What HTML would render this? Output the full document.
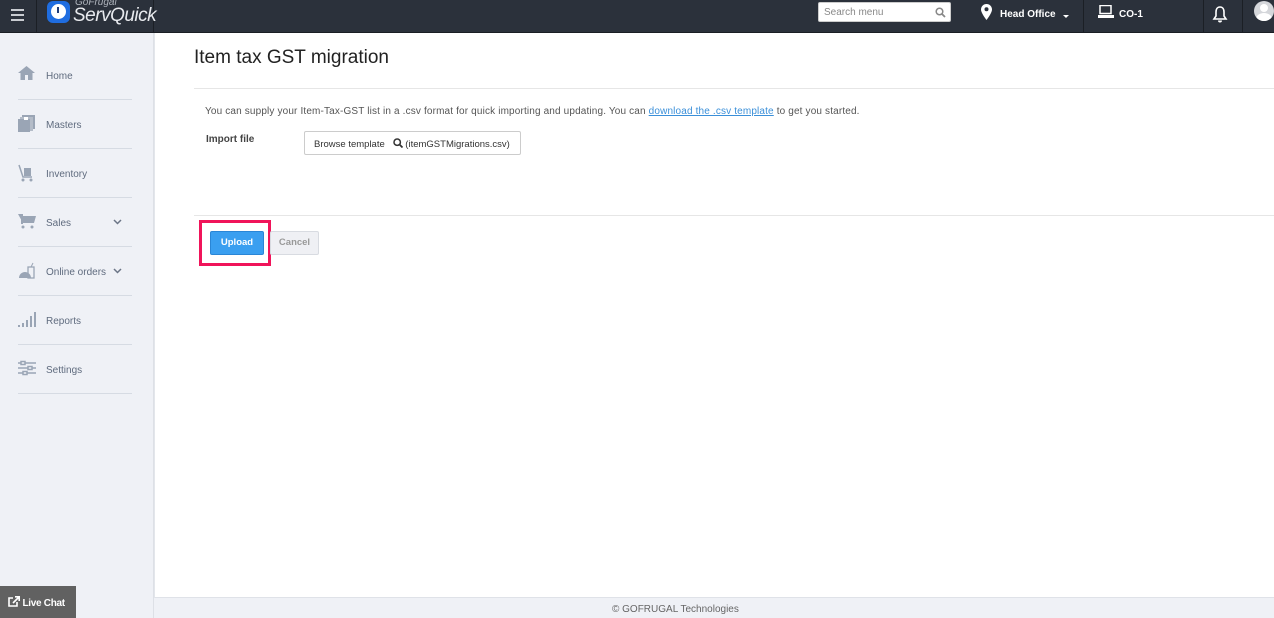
<!DOCTYPE html><html><head><style>
*{margin:0;padding:0;box-sizing:border-box}
body{width:1274px;height:618px;overflow:hidden;background:#eff1f6;font-family:"Liberation Sans",Arial,sans-serif;position:relative}
.hdr{position:absolute;left:0;top:0;width:1274px;height:33px;background:#2b313b;border-bottom:1px solid #1a1e24}
.hdr .sep{position:absolute;top:0;width:1px;height:32px;background:#1b1f25}
.t{position:absolute;white-space:nowrap}
.side{position:absolute;left:0;top:33px;width:154px;height:585px;background:#eff1f6;border-right:1px solid #dde0e6}
.item{position:absolute;left:18px;width:114px;height:49px;border-bottom:1px solid #d6dbe3}
.item span{position:absolute;left:28px;top:20px;font-size:10px;color:#5f6b7e}
.item svg{position:absolute;left:0;top:15px}
.main{position:absolute;left:154px;top:33px;width:1120px;height:565px;background:#fff;border-bottom:1px solid #dfe2e8;border-left:1px solid #e3e6eb}
</style></head><body>
<div class="hdr">
<div class="t" style="left:11px;top:9px;width:13px;height:2px;background:#c9ccd1;box-shadow:0 5px 0 #c9ccd1,0 10px 0 #c9ccd1"></div>
<div class="sep" style="left:36px"></div><div class="sep" style="left:153px"></div>
<div class="t" style="left:47px;top:1px;width:23px;height:22px;border-radius:6px;background:#1f6de0"><div style="position:absolute;left:4px;top:3px;width:15px;height:15px;border-radius:50%;background:#fff"></div><div style="position:absolute;left:10px;top:6px;width:2px;height:6px;background:#1f3c7a"></div></div>
<div class="t" style="left:75px;top:-3px;font-size:10px;font-style:italic;color:#aeb3bb">GoFrugal</div>
<div class="t" style="left:73px;top:5px;font-size:19px;font-style:italic;color:#e8eaee;letter-spacing:-0.5px">ServQuick</div>
<div class="t" style="left:818px;top:2px;width:133px;height:20px;background:#fff;border-radius:2px;border:1px solid #ccc"><span style="position:absolute;left:5px;top:4px;font-size:10px;color:#888">Search menu</span><svg style="position:absolute;right:4px;top:4px" width="11" height="11" viewBox="0 0 11 11"><circle cx="4.5" cy="4.5" r="3.3" fill="none" stroke="#888" stroke-width="1.5"/><path d="M7 7l3 3" stroke="#888" stroke-width="1.8"/></svg></div>
<svg class="t" style="left:981px;top:4px" width="11" height="16" viewBox="0 0 11 16"><path d="M5.5 0C2.5 0 0 2.4 0 5.5 0 9 5.5 16 5.5 16S11 9 11 5.5C11 2.4 8.5 0 5.5 0z" fill="#fff"/><circle cx="5.5" cy="5.3" r="2" fill="#2b313b"/></svg>
<div class="t" style="left:1000px;top:9px;font-size:10px;font-weight:bold;color:#fff">Head Office</div>
<div class="t" style="left:1063px;top:15px;border:3px solid transparent;border-top:3px solid #fff"></div>
<div class="sep" style="left:1083px"></div>
<svg class="t" style="left:1098px;top:5px" width="16" height="14" viewBox="0 0 16 14"><rect x="2" y="0.5" width="11" height="8" fill="none" stroke="#fff" stroke-width="1.5"/><rect x="0" y="10" width="16" height="3" fill="#fff"/></svg>
<div class="t" style="left:1119px;top:9px;font-size:10px;font-weight:bold;color:#fff">CO-1</div>
<div class="sep" style="left:1203px"></div>
<svg class="t" style="left:1212px;top:6px" width="16" height="17" viewBox="0 0 16 17"><path d="M8 1C5 1 4 3.5 4 6v4L2 13h12l-2-3V6C12 3.5 11 1 8 1z" fill="none" stroke="#fff" stroke-width="1.6"/><path d="M6 14.5a2 2 0 0 0 4 0z" fill="#fff"/></svg>
<div class="sep" style="left:1242px"></div>
<div class="t" style="left:1254px;top:1px;width:20px;height:20px;border-radius:50%;background:#d5d7db;overflow:hidden"><div style="position:absolute;left:6px;top:3px;width:8px;height:8px;border-radius:50%;background:#fff"></div><div style="position:absolute;left:2px;top:12px;width:16px;height:12px;border-radius:50%;background:#fff"></div></div>
</div>
<div class="side">
<div class="item" style="top:18px"><svg width="17" height="14" viewBox="0 0 17 14"><path d="M8.5 0L0 7h2.5v7h4.5V9h3v5h4.5V7H17z" fill="#9aa5b5"/></svg><span>Home</span></div>
<div class="item" style="top:67px"><svg width="17" height="17" viewBox="0 0 17 17"><rect x="4" y="0" width="13" height="14" fill="#9aa5b5"/><rect x="2" y="2" width="13" height="14" fill="#b4bcc8"/><rect x="0" y="4" width="12" height="13" fill="#9aa5b5"/><rect x="6" y="2" width="4" height="3" fill="#fff"/></svg><span>Masters</span></div>
<div class="item" style="top:116px"><svg width="16" height="18" viewBox="0 0 16 18"><path d="M1 1l4 12h9" stroke="#9aa5b5" fill="none" stroke-width="1.5"/><rect x="6" y="4" width="7" height="8" fill="#9aa5b5"/><circle cx="5" cy="16" r="1.5" fill="#9aa5b5"/><circle cx="13" cy="16" r="1.5" fill="#9aa5b5"/></svg><span>Inventory</span></div>
<div class="item" style="top:165px"><svg width="18" height="16" viewBox="0 0 18 16"><path d="M0 1h3l1 2h14l-2 7H5z" fill="#9aa5b5"/><rect x="3" y="1" width="2" height="10" fill="#9aa5b5"/><circle cx="5" cy="14" r="1.5" fill="#9aa5b5"/><circle cx="14" cy="14" r="1.5" fill="#9aa5b5"/></svg><span>Sales</span><svg style="left:95px;top:21px" width="9" height="6" viewBox="0 0 9 6"><path d="M1 1l3.5 3.5L8 1" stroke="#6b7586" stroke-width="1.5" fill="none"/></svg></div>
<div class="item" style="top:214px"><svg width="18" height="17" viewBox="0 0 18 17"><path d="M1 16a6 6 0 0 1 12 0z" fill="#9aa5b5"/><rect x="10" y="5" width="6" height="11" fill="none" stroke="#9aa5b5" stroke-width="1.3"/><path d="M13 5l2-4" stroke="#9aa5b5"/></svg><span>Online orders</span><svg style="left:95px;top:21px" width="9" height="6" viewBox="0 0 9 6"><path d="M1 1l3.5 3.5L8 1" stroke="#6b7586" stroke-width="1.5" fill="none"/></svg></div>
<div class="item" style="top:263px"><svg width="18" height="16" viewBox="0 0 18 16"><rect x="0" y="14" width="2" height="2" fill="#9aa5b5"/><rect x="4" y="12" width="2" height="4" fill="#9aa5b5"/><rect x="8" y="9" width="2" height="7" fill="#9aa5b5"/><rect x="12" y="5" width="2" height="11" fill="#9aa5b5"/><rect x="16" y="1" width="2" height="15" fill="#9aa5b5"/></svg><span>Reports</span></div>
<div class="item" style="top:312px"><svg width="18" height="16" viewBox="0 0 18 16"><g stroke="#9aa5b5" stroke-width="1.5" fill="#eff1f6"><path d="M0 3h18M0 8h18M0 13h18"/><rect x="3" y="1.5" width="4" height="3"/><rect x="10" y="6.5" width="4" height="3"/><rect x="5" y="11.5" width="4" height="3"/></g></svg><span>Settings</span></div>
</div>
<div class="t" style="left:0;top:586px;width:76px;height:32px;background:#616161;color:#fff;font-size:10px;font-weight:bold;padding:10px 0 0 8px;letter-spacing:-0.3px"><svg width="12" height="11" viewBox="0 0 12 11" style="vertical-align:-1px"><path d="M5 2H1v8h8V6" stroke="#fff" stroke-width="1.6" fill="none"/><path d="M5 7l6-6M7 0.8h4.2V5" stroke="#fff" stroke-width="1.6" fill="none"/></svg> Live Chat</div>
<div class="main">
<div class="t" style="left:39px;top:14px;font-size:19px;color:#222">Item tax GST migration</div>
<div class="t" style="left:39px;top:55px;width:1081px;height:1px;background:#e6e6e6"></div>
<div class="t" style="left:50px;top:73px;font-size:10px;letter-spacing:0.15px;color:#555">You can supply your Item-Tax-GST list in a .csv format for quick importing and updating. You can <span style="color:#3a8fd9;text-decoration:underline">download the .csv template</span> to get you started.</div>
<div class="t" style="left:51px;top:101px;font-size:10px;font-weight:bold;color:#444">Import file</div>
<div class="t" style="left:149px;top:98px;width:217px;height:24px;border:1px solid #ccc;border-radius:2px;font-size:9.5px;color:#333;padding:6px 0 0 9px">Browse template &nbsp; <svg width="10" height="10" viewBox="0 0 10 10" style="vertical-align:-1px"><circle cx="4.2" cy="4.2" r="3.2" fill="none" stroke="#333" stroke-width="1.5"/><path d="M6.5 6.5l3 3" stroke="#333" stroke-width="1.7"/></svg> (itemGSTMigrations.csv)</div>
<div class="t" style="left:39px;top:182px;width:1081px;height:1px;background:#e6e6e6"></div>
<div class="t" style="left:44px;top:187px;width:72px;height:46px;border:3px solid #f0145a"></div>
<div class="t" style="left:55px;top:198px;width:54px;height:24px;background:#3a9ff0;border:1px solid #2a86d6;border-radius:2px;color:#fff;font-weight:bold;font-size:9.5px;text-align:center;line-height:22px">Upload</div>
<div class="t" style="left:115px;top:198px;width:49px;height:24px;background:#eff0f4;border:1px solid #d8dbe1;border-radius:2px;color:#999;font-weight:bold;font-size:9.5px;text-align:center;line-height:22px">Cancel</div>
</div>
<div class="t" style="left:612px;top:604px;font-size:10px;color:#666">© GOFRUGAL Technologies</div>
</body></html>
